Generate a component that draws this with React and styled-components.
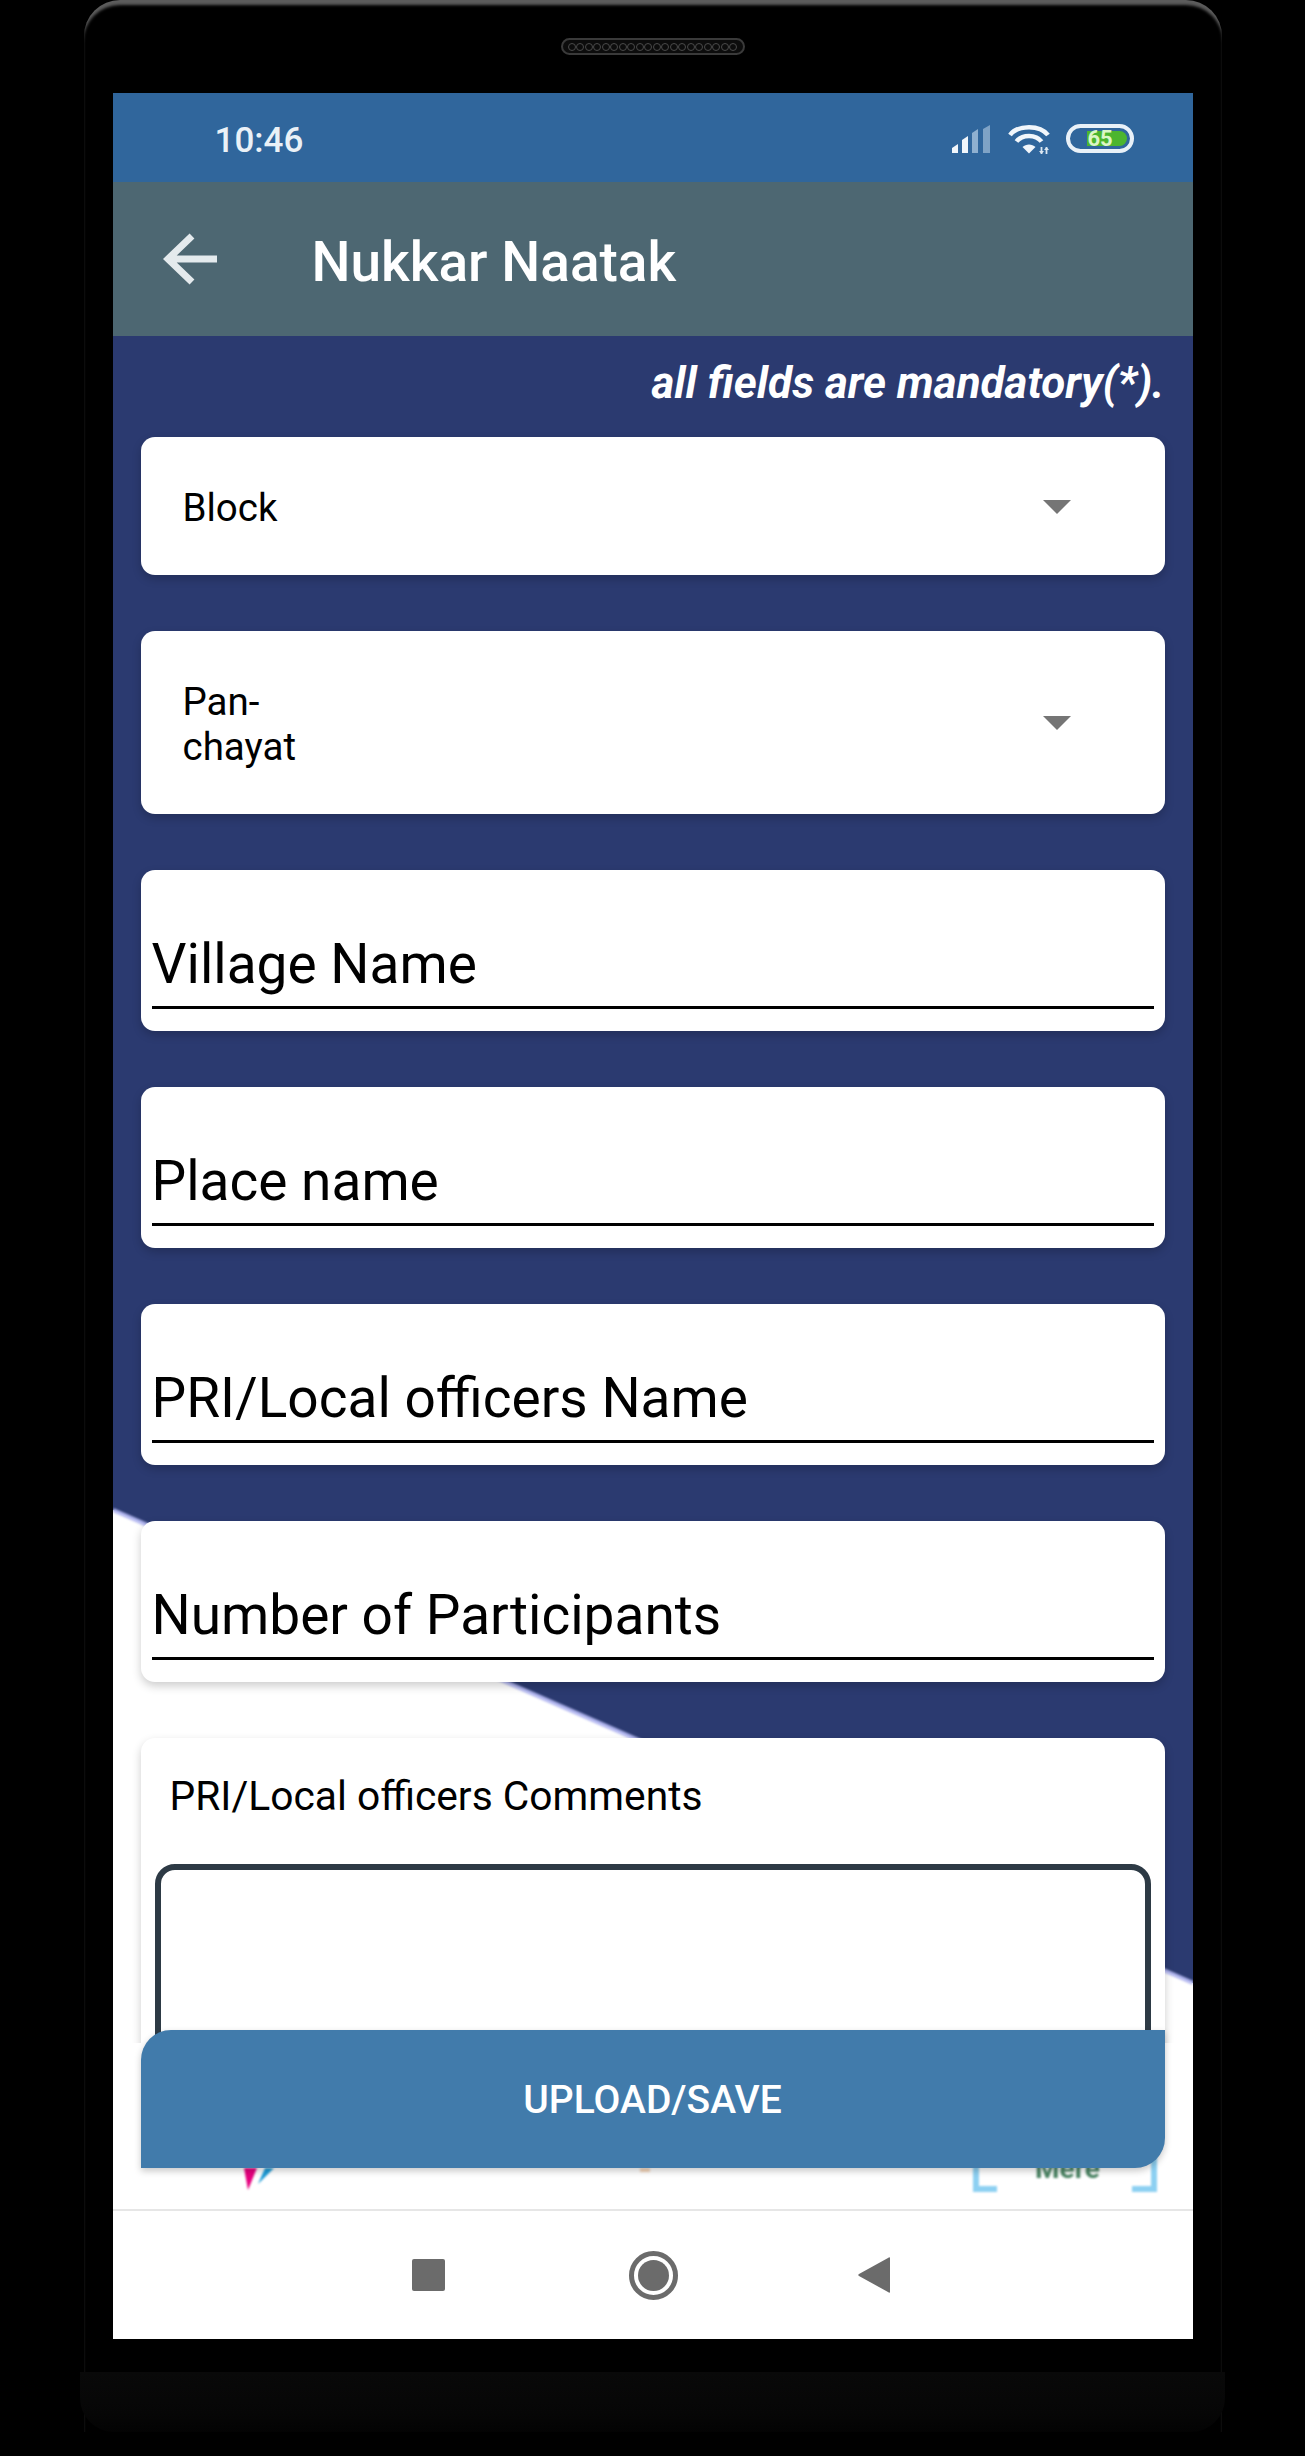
import React from 'react';
import styled, { createGlobalStyle } from 'styled-components';

const GlobalStyle = createGlobalStyle`
  html, body {
    margin: 0;
    padding: 0;
    background: #000;
  }
  * {
    box-sizing: border-box;
  }
`;

const Page = styled.div`
  width: 1305px;
  height: 2456px;
  overflow: hidden;
  background: #000;
  display: flex;
  flex-direction: column;
  align-items: center;
  font-family: Roboto, "Liberation Sans", sans-serif;
`;

const Bezel = styled.div`
  width: 1138px;
  padding-top: 38px;
  display: flex;
  flex-direction: column;
  align-items: center;
  border-radius: 36px 36px 0 0;
  box-shadow: inset 0 6px 3px -1px #5c5c5c;
`;

const Speaker = styled.div`
  width: 184px;
  height: 17px;
  margin-bottom: 38px;
  padding: 0 5px;
  display: flex;
  align-items: center;
  justify-content: space-between;
  border: 2px solid #3a3a3a;
  border-radius: 9px;
  background: #0c0c0c;
`;

const SpeakerHole = styled.span`
  width: 8px;
  height: 8px;
  border-radius: 50%;
  border: 1px solid #4a4a4a;
`;

const Screen = styled.div`
  width: 1080px;
  height: 2246px;
  display: flex;
  flex-direction: column;
  background: #fff;
`;

const StatusBar = styled.div`
  height: 89px;
  flex-shrink: 0;
  padding: 0 59px 0 102px;
  display: flex;
  align-items: center;
  justify-content: space-between;
  background: #30669c;
`;

const Clock = styled.span`
  padding-top: 5px;
  font-size: 35px;
  font-weight: 500;
  color: #eaf1f7;
`;

const StatusIcons = styled.div`
  padding-top: 2px;
  display: flex;
  align-items: center;
  gap: 16px;
`;

const Battery = styled.div`
  width: 68px;
  height: 29px;
  padding: 3px;
  display: flex;
  justify-content: flex-end;
  border: 4px solid #e9f1f8;
  border-radius: 15px;
`;

const BatteryLevel = styled.div`
  width: 40px;
  height: 15px;
  padding-left: 1px;
  display: flex;
  align-items: center;
  font-size: 22px;
  font-weight: 700;
  color: #dcf6c6;
  background: #4cb52e;
  border-radius: 0 8px 8px 0;
`;

const AppBar = styled.div`
  height: 154px;
  flex-shrink: 0;
  padding-left: 50px;
  display: flex;
  align-items: center;
  gap: 95px;
  background: #4d6772;
`;

const Title = styled.h1`
  margin: 0;
  padding-top: 6px;
  font-size: 55px;
  font-weight: 500;
  color: #fff;
`;

const Content = styled.div`
  position: relative;
  flex: 1;
  min-height: 0;
`;

const Backdrop = styled.svg`
  position: absolute;
  top: 0;
  left: 0;
  width: 1080px;
  height: 1873px;
`;

const BackdropEdge = styled.line`
  stroke: #b4b8f0;
  stroke-width: 4;
  filter: blur(1px);
`;

const FormArea = styled.div`
  position: relative;
  height: 1707px;
  padding: 0 28px;
  display: flex;
  flex-direction: column;
  gap: 56px;
  overflow: hidden;
`;

const Note = styled.div`
  height: 101px;
  margin-bottom: -56px;
  flex-shrink: 0;
  padding: 21px 0 0 0;
  text-align: right;
  font-size: 44px;
  font-weight: 700;
  font-style: italic;
  color: #fff;
`;

const Card = styled.div`
  flex-shrink: 0;
  background: #fff;
  border-radius: 14px;
  box-shadow: 0 4px 10px rgba(0, 0, 0, 0.2);
`;

const SelectCard = styled(Card)`
  padding: 48px 64px 45px 42px;
  display: flex;
  align-items: center;
  justify-content: space-between;
`;

const SelectText = styled.div`
  font-size: 38.5px;
  line-height: 45px;
  color: #000;
`;

const Caret = styled.span`
  width: 0;
  height: 0;
  margin: -2px 30px 0 0;
  border-left: 14px solid transparent;
  border-right: 14px solid transparent;
  border-top: 14px solid #757575;
`;

const FieldCard = styled(Card)`
  height: 161px;
  padding: 62px 11px 0;
`;

const FieldText = styled.div`
  height: 77px;
  border-bottom: 3px solid #000;
  font-size: 55px;
  line-height: 64px;
  color: #000;
`;

const CommentCard = styled(Card)`
  padding: 34px 14px 0;
`;

const CommentLabel = styled.div`
  padding-left: 15px;
  margin-bottom: 44px;
  font-size: 40.75px;
  line-height: 48px;
  color: #000;
`;

const CommentBox = styled.div`
  height: 300px;
  border: 6px solid #2d3a45;
  border-radius: 20px;
`;

const LogoStrip = styled.svg`
  position: absolute;
  left: 0;
  bottom: 0;
  width: 1080px;
  height: 100px;
  filter: blur(0.8px);
`;

const LogoText = styled.text`
  font-family: Roboto, sans-serif;
  font-size: 28px;
  font-weight: 700;
  fill: #4a8463;
`;

const SaveButton = styled.button`
  position: absolute;
  left: 28px;
  right: 28px;
  bottom: 41px;
  height: 138px;
  padding: 2px 0 0;
  border: 0;
  border-radius: 30px 0 30px 0;
  background: #417bab;
  box-shadow: 0 3px 7px rgba(0, 0, 0, 0.22);
  font-family: inherit;
  font-size: 39px;
  font-weight: 500;
  color: #fff;
`;

const NavBar = styled.div`
  height: 130px;
  flex-shrink: 0;
  padding-left: 299px;
  display: flex;
  align-items: center;
  gap: 182px;
  border-top: 2px solid #e6e6e6;
`;

const NavSquare = styled.span`
  width: 33px;
  height: 32px;
  margin-right: 2px;
  border-radius: 2px;
  background: #6b6b6b;
`;

const NavCircle = styled.span`
  width: 49px;
  height: 49px;
  display: flex;
  align-items: center;
  justify-content: center;
  border: 5px solid #6b6b6b;
  border-radius: 50%;
`;

const NavDot = styled.span`
  width: 31px;
  height: 31px;
  border-radius: 50%;
  background: #6b6b6b;
`;

const NavBackIcon = styled.svg`
  margin-left: -2px;
`;

const Chin = styled.div`
  width: 1145px;
  height: 60px;
  margin-top: 33px;
  background: linear-gradient(#090909, #060606 70%, #030303);
  border-radius: 0 0 34px 34px;
`;

const SignalIcon = () => (
  <svg width="40" height="28" viewBox="0 0 40 28">
    <path d="M0 28V23L6 19V28Z" fill="#f1f6fb" />
    <path d="M10 28V15L16 11V28Z" fill="#f1f6fb" />
    <path d="M20 28V8L26 4V28Z" fill="#8fb0d0" />
    <path d="M31 28V4L38 0V28Z" fill="#7fa3c6" />
  </svg>
);

const WifiIcon = () => (
  <svg width="42" height="30" viewBox="0 0 42 30" fill="none">
    <path d="M2 11C10 0.500 32 0.500 40 11" stroke="#f1f6fb" strokeWidth="4.500" />
    <path d="M8.500 17.500C14 10 28 10 33.500 17.500" stroke="#f1f6fb" strokeWidth="4.500" />
    <path d="M14.500 23C18 19.500 24 19.500 27.500 23L21 29.500Z" fill="#f1f6fb" />
    <path d="M33.500 23V30M38.500 23V30" stroke="#dbe7f1" strokeWidth="1.800" />
    <path d="M31 27L33.500 30L36 27M36 26L38.500 23L41 26" fill="#dbe7f1" />
  </svg>
);

const BackArrow = () => (
  <svg width="54" height="52" viewBox="0 0 54 52" fill="none">
    <path d="M54 26H5M29 3L5 26L29 49" stroke="#e4eaed" strokeWidth="7" />
  </svg>
);

const NavBack = () => (
  <NavBackIcon width="32" height="36" viewBox="0 0 32 36">
    <path d="M32 1C32 0 31 0 30 1L1 17C0 17.500 0 18.500 1 19L30 35C31 36 32 36 32 35Z" fill="#6b6b6b" />
  </NavBackIcon>
);

const fields = ['Village Name', 'Place name', 'PRI/Local officers Name', 'Number of Participants'];

export default function App() {
  return (
    <Page>
      <GlobalStyle />
      <Bezel>
        <Speaker>
          {Array.from({ length: 20 }, (_, i) => (
            <SpeakerHole key={i} />
          ))}
        </Speaker>
        <Screen>
          <StatusBar>
            <Clock>10:46</Clock>
            <StatusIcons>
              <SignalIcon />
              <WifiIcon />
              <Battery>
                <BatteryLevel>65</BatteryLevel>
              </Battery>
            </StatusIcons>
          </StatusBar>
          <AppBar>
            <BackArrow />
            <Title>Nukkar Naatak</Title>
          </AppBar>
          <Content>
            <Backdrop viewBox="0 0 1080 1873">
              <polygon points="0,0 1080,0 1080,1647 0,1174" fill="#2b3a70" />
              <BackdropEdge x1="0" y1="1174" x2="1080" y2="1647" />
            </Backdrop>
            <LogoStrip viewBox="0 0 1080 100">
              <polygon points="131,59 144,59 135,81" fill="#e6007e" />
              <polygon points="152,59 161,59 145,75" fill="#1d9bd7" />
              <rect x="527" y="59" width="10" height="4" fill="#eeb98a" opacity="0.6" />
              <path d="M863 40V80H884M1041 40V80H1019" fill="none" stroke="#8dd0f2" strokeWidth="6" />
              <LogoText x="922" y="69">Mere</LogoText>
            </LogoStrip>
            <FormArea>
              <Note>all fields are mandatory(*).</Note>
              <SelectCard>
                <SelectText>Block</SelectText>
                <Caret />
              </SelectCard>
              <SelectCard>
                <SelectText>
                  Pan-
                  <br />
                  chayat
                </SelectText>
                <Caret />
              </SelectCard>
              {fields.map(f => (
                <FieldCard key={f}>
                  <FieldText>{f}</FieldText>
                </FieldCard>
              ))}
              <CommentCard>
                <CommentLabel>PRI/Local officers Comments</CommentLabel>
                <CommentBox />
              </CommentCard>
            </FormArea>
            <SaveButton>UPLOAD/SAVE</SaveButton>
          </Content>
          <NavBar>
            <NavSquare />
            <NavCircle>
              <NavDot />
            </NavCircle>
            <NavBack />
          </NavBar>
        </Screen>
        <Chin />
      </Bezel>
    </Page>
  );
}
